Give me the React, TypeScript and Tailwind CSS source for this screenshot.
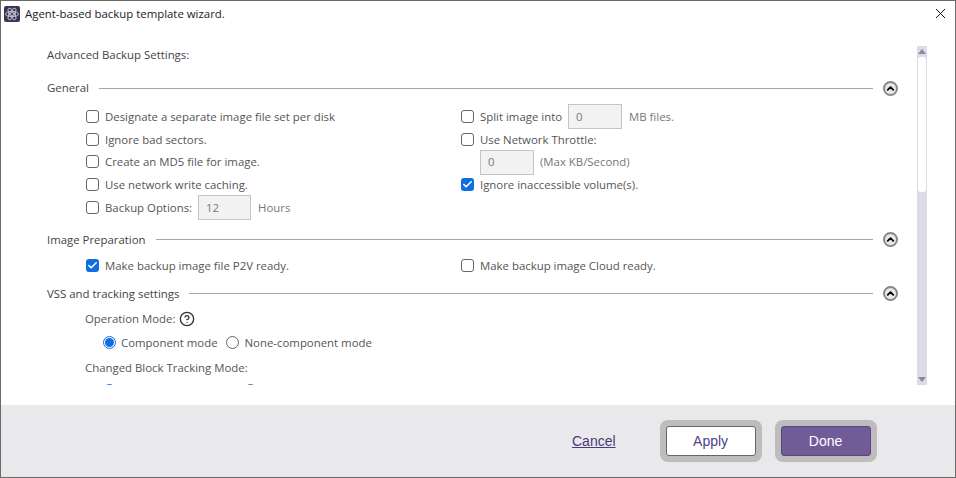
import React from 'react';
import { X, Check, ChevronUp, CircleHelp } from 'lucide-react';

const font = { fontFamily: '"Open Sans", sans-serif' };

const Box = ({ checked = false }: { checked?: boolean }) =>
  checked ? (
    <span className="flex w-[13px] h-[13px] shrink-0 items-center justify-center rounded-[3px] bg-[#0f6fe0]">
      <Check className="w-[11px] h-[11px] text-white" strokeWidth={3.5} />
    </span>
  ) : (
    <span className="block w-[13px] h-[13px] shrink-0 rounded-[3px] border border-[#666] bg-white" />
  );

const Radio = ({ checked = false }: { checked?: boolean }) => (
  <span
    className={`flex w-[13px] h-[13px] shrink-0 items-center justify-center rounded-full border bg-white ${
      checked ? 'border-[#0f6fe0]' : 'border-[#666]'
    }`}
  >
    {checked && <span className="block w-[9px] h-[9px] rounded-full bg-[#0f6fe0]" />}
  </span>
);

const Field = ({ value, width }: { value: string; width: string }) => (
  <span className={`flex h-[25px] items-center border border-[#c4c4c4] bg-[#f2f2f2] pl-[7px] text-[#777] ${width}`}>
    {value}
  </span>
);

const Row = ({ checked, children }: { checked?: boolean; children: React.ReactNode }) => (
  <div className="flex h-[22.8px] items-center gap-[6px]">
    <Box checked={checked} />
    {children}
  </div>
);

const SectionHead = ({ title }: { title: string }) => (
  <div className="flex h-[20px] items-center">
    <span className="text-[#444]">{title}</span>
    <span className="ml-[10px] h-px flex-1 bg-[#a6a6a6]" />
    <span className="ml-[10px] flex w-[15px] h-[15px] items-center justify-center rounded-full border-2 border-[#888] bg-[#e8e8e8]">
      <ChevronUp className="w-[11px] h-[11px] text-black" strokeWidth={4} />
    </span>
  </div>
);

export default function App() {
  return (
    <div
      style={font}
      className="flex h-[478px] w-[956px] flex-col overflow-hidden border border-[#6a6a6a] bg-white text-[11.4px] text-[#555]"
    >
      {/* title bar */}
      <div className="flex h-[25px] shrink-0 items-center pl-[3px] pr-[6px]">
        <svg viewBox="0 0 16 16" className="h-[16px] w-[16px] rounded-[2px] bg-[#3a3550]" fill="none" stroke="#d8d6e4" strokeWidth="0.8">
          <circle cx="8" cy="8" r="1.6" />
          <ellipse cx="8" cy="8" rx="6.5" ry="2.6" />
          <ellipse cx="8" cy="8" rx="6.5" ry="2.6" transform="rotate(60 8 8)" />
          <ellipse cx="8" cy="8" rx="6.5" ry="2.6" transform="rotate(120 8 8)" />
        </svg>
        <span className="ml-[5px] text-[11.4px] text-[#222]">Agent-based backup template wizard.</span>
        <X className="ml-auto h-[17px] w-[17px] text-black" strokeWidth={1.3} />
      </div>

      {/* scrolling settings area */}
      <div className="flex h-[379px] shrink-0 overflow-hidden pt-[20px]">
        <div className="h-[339px] w-[916px] overflow-hidden pl-[46px]">
          <div className="flex h-[18px] items-center text-[#444]">Advanced Backup Settings:</div>
          <div className="mt-[14px] w-[851px]">
            <SectionHead title="General" />
            <div className="mt-[7px] grid grid-cols-[375px_1fr] pl-[39px]">
              <div>
                <Row>Designate a separate image file set per disk</Row>
                <Row>Ignore bad sectors.</Row>
                <Row>Create an MD5 file for image.</Row>
                <Row>Use network write caching.</Row>
                <Row>
                  Backup Options:
                  <Field value="12" width="w-[53px]" />
                  <span className="ml-[1px] text-[#777]">Hours</span>
                </Row>
              </div>
              <div>
                <Row>
                  Split image into
                  <Field value="0" width="w-[54px]" />
                  <span className="ml-[1px] text-[#777]">MB files.</span>
                </Row>
                <Row>Use Network Throttle:</Row>
                <div className="flex h-[22.8px] items-center gap-[6px] pl-[19px] text-[#777]">
                  <Field value="0" width="w-[54px]" />
                  (Max KB/Second)
                </div>
                <Row checked>Ignore inaccessible volume(s).</Row>
              </div>
            </div>
            <div className="mt-[11px]">
              <SectionHead title="Image Preparation" />
            </div>
            <div className="mt-[4px] grid grid-cols-[375px_1fr] pl-[39px]">
              <Row checked>Make backup image file P2V ready.</Row>
              <Row>Make backup image Cloud ready.</Row>
            </div>
            <div className="mt-[7px]">
              <SectionHead title="VSS and tracking settings" />
            </div>
            <div className="pl-[38px]">
              <div className="mt-[5px] flex h-[20px] items-center gap-[4px]">
                Operation Mode:
                <CircleHelp className="h-[16px] w-[16px] text-[#333]" strokeWidth={2} />
              </div>
              <div className="mt-[2px] flex h-[23px] items-center pl-[18px]">
                <Radio checked />
                <span className="ml-[5px]">Component mode</span>
                <span className="ml-[8px]">
                  <Radio />
                </span>
                <span className="ml-[6px]">None-component mode</span>
              </div>
              <div className="mt-[2px] flex h-[23px] items-center">Changed Block Tracking Mode:</div>
              {/* only the top edge of these radios shows above the fold */}
              <div className="mt-[5px] flex h-[13px] items-center gap-[128px] pl-[18px]">
                <Radio checked />
                <Radio />
              </div>
            </div>
          </div>
        </div>
        {/* scrollbar */}
        <div className="flex h-[339px] w-[10px] shrink-0 flex-col items-center bg-[#dcdce8]">
          <span className="mt-[3px] h-0 w-0 border-x-[4px] border-b-[5px] border-x-transparent border-b-[#8a8a9a]" />
          <span className="mt-[3px] h-[135px] w-[8px] rounded-[3px] bg-white" />
          <span className="mt-auto mb-[3px] h-0 w-0 border-x-[4px] border-t-[5px] border-x-transparent border-t-[#8a8a9a]" />
        </div>
      </div>

      {/* footer */}
      <div className="flex flex-1 items-center bg-[#e9e9eb] pl-[571px] font-['Liberation_Sans',sans-serif] text-[14px]">
        <a className="text-[#4a3a7a] underline">Cancel</a>
        <button className="ml-[44px] h-[42px] w-[102px] rounded-[8px] bg-[#bdbdbd] p-[6px]">
          <span className="flex h-full w-full items-center justify-center rounded-[3px] border border-[#666] bg-white text-[#4d4388]">
            Apply
          </span>
        </button>
        <button className="ml-[13px] h-[42px] w-[102px] rounded-[8px] bg-[#bdbdbd] p-[6px]">
          <span className="flex h-full w-full items-center justify-center rounded-[3px] border border-[#5a4780] bg-[#715c98] text-white">
            Done
          </span>
        </button>
      </div>
    </div>
  );
}
